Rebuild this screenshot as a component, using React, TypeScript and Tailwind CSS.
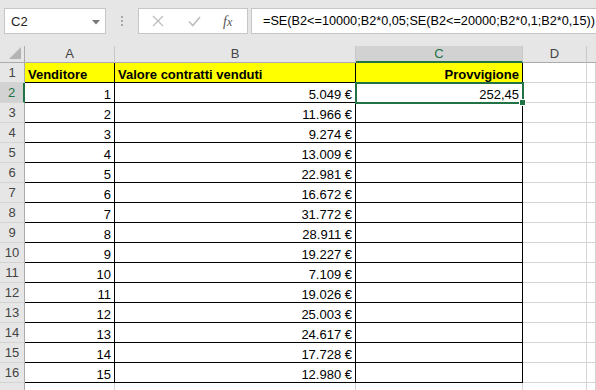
import React from "react";

const rows: Array<[number, string]> = [
  [1, "5.049 €"],
  [2, "11.966 €"],
  [3, "9.274 €"],
  [4, "13.009 €"],
  [5, "22.981 €"],
  [6, "16.672 €"],
  [7, "31.772 €"],
  [8, "28.911 €"],
  [9, "19.227 €"],
  [10, "7.109 €"],
  [11, "19.026 €"],
  [12, "25.003 €"],
  [13, "24.617 €"],
  [14, "17.728 €"],
  [15, "12.980 €"],
];

const font = { fontFamily: '"Liberation Sans", Arial, sans-serif' };

function RowHeader({ n, active }: { n?: number; active?: boolean }) {
  return (
    <div
      className={
        "flex items-center justify-center border-b border-b-[#d4d4d4] " +
        (active
          ? "bg-[#d2d2d2] text-[#217346] border-r-2 border-r-[#217346]"
          : "bg-[#e6e6e6] text-[#444] border-r border-r-[#ababab]")
      }
    >
      {n}
    </div>
  );
}

function Cell({
  children,
  table,
  bold,
  yellow,
  right,
}: {
  children?: React.ReactNode;
  table?: boolean;
  bold?: boolean;
  yellow?: boolean;
  right?: boolean;
}) {
  return (
    <div
      className={
        "flex items-end overflow-hidden whitespace-nowrap border-r border-b px-[3px] leading-[15px] " +
        (table ? "border-black " : "border-[#d4d4d4] ") +
        (yellow ? "bg-[#ffff00] " : "bg-white ") +
        (bold ? "font-bold " : "") +
        (right ? "justify-end" : "justify-start")
      }
    >
      {children}
    </div>
  );
}

export default function App() {
  return (
    <div className="relative h-[390px] w-[596px] overflow-hidden bg-white text-[13px] text-black" style={font}>
      {/* Formula bar */}
      <div className="flex h-[46px] items-start bg-[#e6e6e6] pt-[8px]">
        <div className="ml-[4px] flex h-[26px] w-[102px] items-center justify-between border border-[#c6c6c6] bg-white pl-[6px] pr-[5px] pt-[2px] text-[13px] text-[#222]">
          <span>C2</span>
          <svg width="8" height="5" viewBox="0 0 8 5">
            <path d="M0 0 H8 L4 4.5 Z" fill="#777" />
          </svg>
        </div>
        <div className="ml-[14px] flex h-[26px] w-[4px] flex-col items-center justify-center gap-[2px]">
          <span className="h-[2px] w-[2px] bg-[#a8a8a8]" />
          <span className="h-[2px] w-[2px] bg-[#a8a8a8]" />
          <span className="h-[2px] w-[2px] bg-[#a8a8a8]" />
        </div>
        <div className="ml-[14px] flex h-[26px] w-[110px] items-center border border-[#c6c6c6] bg-white">
          <svg className="ml-[13px]" width="12" height="12" viewBox="0 0 12 12">
            <path d="M1 1 L11 11 M11 1 L1 11" stroke="#bdbdbd" strokeWidth="1.3" />
          </svg>
          <svg className="ml-[24px]" width="13" height="11" viewBox="0 0 13 11">
            <path d="M1 5.5 L4.8 9.5 L12 1" stroke="#bdbdbd" strokeWidth="1.6" fill="none" />
          </svg>
          <span
            className="ml-[22px] text-[14px] italic text-[#555]"
            style={{ fontFamily: '"Liberation Serif", "Times New Roman", serif' }}
          >
            f<span className="text-[12px]">x</span>
          </span>
        </div>
        <div className="ml-[3px] flex h-[26px] flex-1 items-center whitespace-nowrap border border-r-0 border-[#c6c6c6] bg-white pl-[11px] pt-[2px] text-[12.7px]">
          =SE(B2&lt;=10000;B2*0,05;SE(B2&lt;=20000;B2*0,1;B2*0,15))
        </div>
      </div>

      {/* Sheet grid */}
      <div className="grid grid-cols-[25px_90px_241px_167px_64px_1fr] grid-rows-[17px_repeat(17,20px)]">
        {/* column headers */}
        <div className="relative border-r border-b border-[#ababab] bg-[#e6e6e6]">
          <svg className="absolute right-[3px] bottom-[3px]" width="12" height="12" viewBox="0 0 12 12">
            <path d="M12 0 V12 H0 Z" fill="#b4b4b4" />
          </svg>
        </div>
        <div className="flex items-center justify-center border-r border-b border-r-[#c8c8c8] border-b-[#ababab] bg-[#e6e6e6] text-[#444]">A</div>
        <div className="flex items-center justify-center border-r border-b border-r-[#c8c8c8] border-b-[#ababab] bg-[#e6e6e6] text-[#444]">B</div>
        <div className="flex items-center justify-center border-r border-b-2 border-r-[#c8c8c8] border-b-[#217346] bg-[#d2d2d2] pt-[1px] text-[#217346]">C</div>
        <div className="flex items-center justify-center border-r border-b border-r-[#c8c8c8] border-b-[#ababab] bg-[#e6e6e6] text-[#444]">D</div>
        <div className="border-b border-b-[#ababab] bg-[#e6e6e6]" />

        {/* row 1 */}
        <RowHeader n={1} />
        <Cell table bold yellow>Venditore</Cell>
        <Cell table bold yellow>Valore contratti venduti</Cell>
        <Cell table bold yellow right>Provvigione</Cell>
        <Cell />
        <Cell />

        {rows.map(([n, v], i) => (
          <React.Fragment key={n}>
            <RowHeader n={i + 2} active={i === 0} />
            <Cell table right>{n}</Cell>
            <Cell table right>{v}</Cell>
            <Cell table right>{i === 0 ? "252,45" : ""}</Cell>
            <Cell />
            <Cell />
          </React.Fragment>
        ))}

        {/* row 17, cut off by the window */}
        <RowHeader />
        <Cell />
        <Cell />
        <Cell />
        <Cell />
        <Cell />
      </div>

      {/* selection outline on C2 */}
      <div className="pointer-events-none absolute left-[355px] top-[82px] h-[22px] w-[169px] border-2 border-[#217346]" />
      <div className="pointer-events-none absolute left-[519px] top-[99px] h-[7px] w-[7px] border border-white bg-[#217346]" />
    </div>
  );
}
